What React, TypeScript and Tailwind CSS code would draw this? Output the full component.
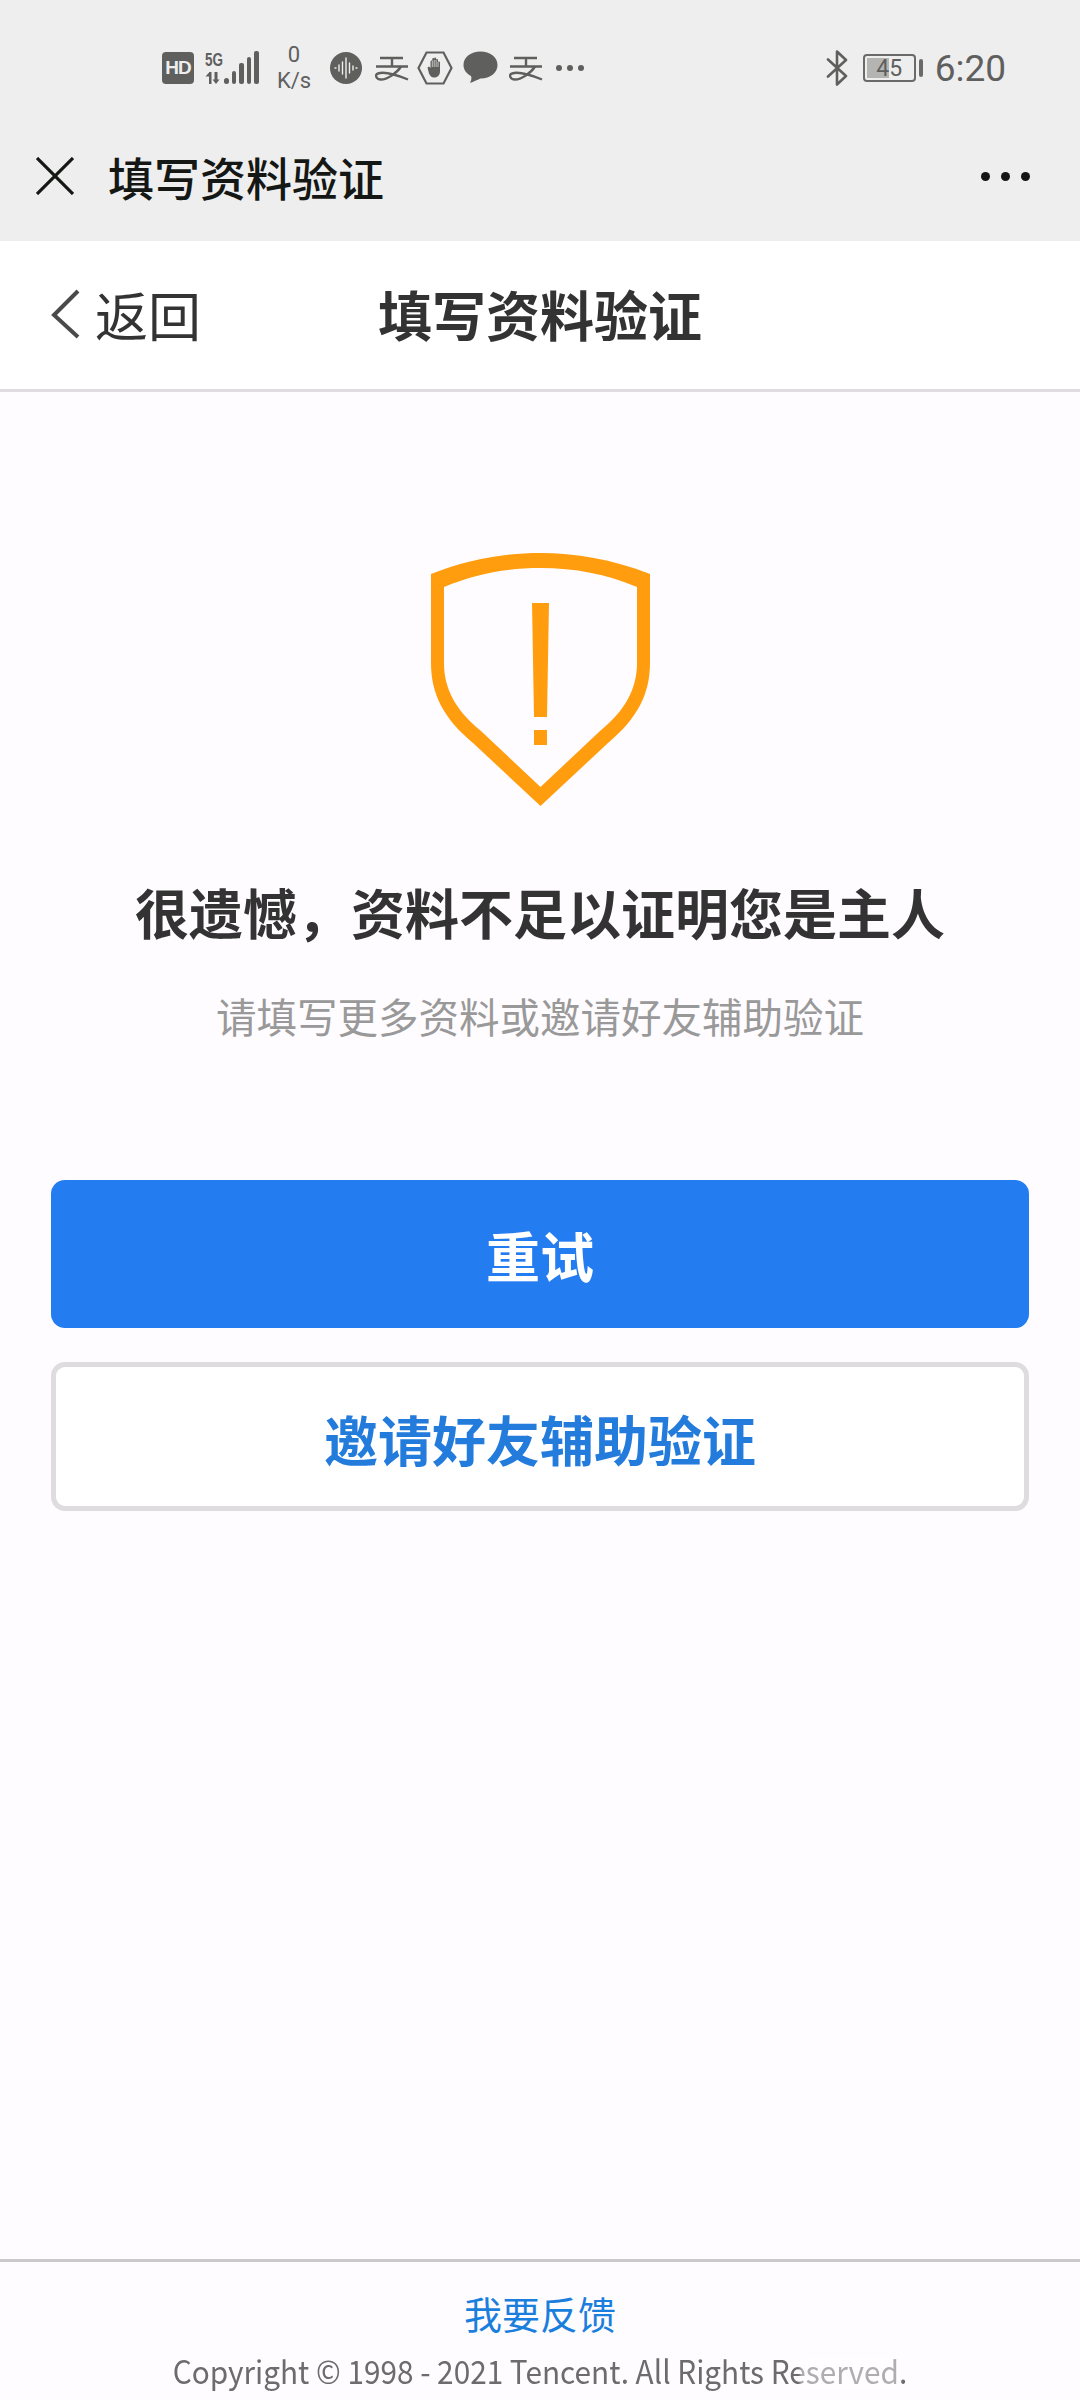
const cjk = "font-['Noto_Sans_CJK_SC','Noto_Sans',sans-serif]";

function AlipayGlyph() {
  return (
    <svg width="34" height="26" viewBox="0 0 34 26" fill="none" stroke="#5f605e" strokeWidth="2.400">
      <path d="M5 3H28M1 11.500H33M17 3V11.500" />
      <path d="M26 11.500C22 18 12 24.500 6 24.500C1 24.500 -0.500 19.500 3 18.500C10 16 22 20 33 24.500" />
    </svg>
  );
}

function StatusBar() {
  return (
    <div className="flex h-[100px] items-end pb-[2px] pl-[162px] pr-[74px] text-[#5f605e]">
      <div className="flex h-[60px] items-center">
        <div className="flex h-[32px] w-[32px] items-center justify-center rounded-[4px] bg-[#5f605e] font-['Liberation_Sans',sans-serif] text-[19px] font-bold tracking-[-1px] text-[#eeeeee]">
          HD
        </div>
        <svg className="ml-[11px] overflow-visible" width="54" height="34" viewBox="0 0 54 34" fill="#5f605e">
          <text x="0" y="15" fontFamily="Liberation Sans, sans-serif" fontSize="19" fontWeight="700" textLength="18" lengthAdjust="spacingAndGlyphs">
            5G
          </text>
          <path d="M4 21h2.500v12h-2.500zM0.500 25.500l4-4.500v4.500zM11 33l-3.500-4.500h2v-7.500h3v7.500h2l-3.500 4.500z" />
          <rect x="19" y="27" width="5" height="6" rx="2.500" />
          <rect x="27" y="20" width="4" height="13" rx="2" />
          <rect x="34" y="12" width="5" height="21" rx="2" />
          <rect x="42" y="6" width="4" height="27" rx="2" />
          <rect x="49" y="0" width="5" height="33" rx="2" />
        </svg>
        <div className="ml-[17px] flex w-[36px] flex-col items-center font-['Roboto',sans-serif] text-[22px] leading-[26px]">
          <span>0</span>
          <span>K/s</span>
        </div>
        <svg className="ml-[18px]" width="32" height="32" viewBox="0 0 32 32">
          <circle cx="16" cy="16" r="16" fill="#5f605e" />
          <path
            d="M5 16h1M9 13v6M12.500 10v12M16 6v20M19.500 11v10M23 14v4M26 16h1"
            stroke="#eeeeee"
            strokeWidth="1.400"
            strokeLinecap="round"
          />
        </svg>
        <div className="ml-[13px]">
          <AlipayGlyph />
        </div>
        <svg className="ml-[8px]" width="36" height="34" viewBox="0 0 36 34" fill="none">
          <path d="M9.500 1.500H26.500L34.500 17L26.500 32.500H9.500L1.500 17Z" stroke="#5f605e" strokeWidth="2.200" />
          <path
            d="M10.500 16.500L12 15.500L13.500 17V10.500C13.500 9 15.300 9 15.300 10.500V8C15.300 6.500 17.200 6.500 17.200 8V7.500C17.200 6 19.100 6 19.100 7.500V9C19.100 7.500 21 7.500 21 9V11.500C21 10 23 10 23 11.500V20C23 24 21 26.500 17 26.500C14 26.500 13 24.500 12 22.500Z"
            fill="#5f605e"
          />
          <path d="M15.300 10V16M17.200 9V16M19.100 9V16M21 11V16" stroke="#eeeeee" strokeWidth="0.700" />
        </svg>
        <svg className="ml-[10px]" width="35" height="34" viewBox="0 0 35 34" fill="#5f605e">
          <path d="M17.500 0.500C27 0.500 34.500 6 34.500 14C34.500 22 27 27.500 18 27.500C16.500 27.500 15 29 7 32C8 30 9 27 8 25C3 22.500 0.500 18.500 0.500 14C0.500 6 8 0.500 17.500 0.500Z" />
        </svg>
        <div className="ml-[11px]">
          <AlipayGlyph />
        </div>
        <div className="ml-[13px] flex gap-[5px]">
          <span className="h-[6px] w-[6px] rounded-full bg-[#5f605e]" />
          <span className="h-[6px] w-[6px] rounded-full bg-[#5f605e]" />
          <span className="h-[6px] w-[6px] rounded-full bg-[#5f605e]" />
        </div>
      </div>
      <div className="ml-auto flex h-[60px] items-center">
        <svg width="22" height="36" viewBox="0 0 22 36" fill="none" stroke="#5f605e" strokeWidth="2.600" strokeLinecap="round" strokeLinejoin="round">
          <path d="M2 9.500L20 26L11 34.500V1.500L20 10L2 26.500" />
        </svg>
        <div className="relative ml-[15px] flex h-[28px] w-[53px] items-center justify-center overflow-hidden rounded-[4px] border-2 border-[#6a6b69] font-['Roboto',sans-serif] text-[23px] leading-none">
          <span className="absolute left-[2px] top-[2px] h-[20px] w-[22px] bg-[#b4b5b3]" />
          <span className="relative">45</span>
        </div>
        <span className="ml-[3px] h-[18px] w-[4px] rounded-[2px] bg-[#6a6b69]" />
        <span className="ml-[12px] font-['Roboto',sans-serif] text-[37px] leading-none">6:20</span>
      </div>
    </div>
  );
}

export default function App() {
  return (
    <div className={`flex h-[2400px] flex-col overflow-hidden bg-[#fffcff] ${cjk}`}>
      <div className="h-[241px] bg-[#eeeeee]">
        <StatusBar />
        <div className="flex h-[141px] items-start pl-[36px] pr-[50px] pt-[50px]">
          <div className="flex h-[52px] items-center">
            <svg width="38" height="38" viewBox="0 0 38 38" fill="none" stroke="#151715" strokeWidth="3.200">
              <path d="M1 1L37 37M37 1L1 37" />
            </svg>
            <span className="ml-[34px] text-[46px] leading-[52px] font-medium text-[#151715]">填写资料验证</span>
          </div>
          <div className="ml-auto flex h-[52px] items-center gap-[11px]">
            <span className="h-[9px] w-[9px] rounded-full bg-[#151715]" />
            <span className="h-[9px] w-[9px] rounded-full bg-[#151715]" />
            <span className="h-[9px] w-[9px] rounded-full bg-[#151715]" />
          </div>
        </div>
      </div>

      <div className="relative flex h-[151px] items-center justify-center border-b-[3px] border-[#dedcde] bg-white pb-[3px]">
        <div className="absolute left-[50px] top-[47px] flex items-center">
          <svg width="30" height="50" viewBox="0 0 30 50" fill="none" stroke="#4a4a4a" strokeWidth="4">
            <path d="M28 2L4 26L28 48" />
          </svg>
          <span className="ml-[15px] text-[53px] leading-[52px] text-[#333333]">返回</span>
        </div>
        <span className="text-[54px] leading-[60px] font-bold text-[#333333]">填写资料验证</span>
      </div>

      <div className="flex flex-1 flex-col items-center px-[51px] pt-[161px]">
        <svg width="219" height="253" viewBox="0 0 219 253" fill="#ff9d0f">
          <path
            fillRule="evenodd"
            d="M0 21C38 6 75 0 109.500 0C144 0 181 6 219 21V110C219 140 207 165 177 190L109.500 253L42 190C12 165 0 140 0 110ZM13 34V110C13 135 24 157 50 178L109.500 234L169 178C195 157 206 135 206 110V34C175 21 144 15 109.500 15C75 15 44 21 13 34Z"
          />
          <path d="M101 50H118L116 164H103Z" />
          <rect x="103" y="177" width="13" height="15" />
        </svg>

        <h1 className="mt-[74px] text-[54px] leading-[64px] font-bold text-[#333333]">
          很遗憾，资料不足以证明您是主人
        </h1>
        <p className="mt-[44px] text-[40.500px] leading-[56px] text-[#999999]">请填写更多资料或邀请好友辅助验证</p>

        <button className="mt-[136px] flex h-[148px] w-full items-center justify-center rounded-[14px] bg-[#237cf0] text-[54px] font-bold text-white">
          <span className="mt-[1px]">重试</span>
        </button>
        <button className="mt-[34px] flex h-[149px] w-full items-center justify-center rounded-[14px] border-[5px] border-[#dedcde] bg-white text-[54px] font-bold text-[#237cdc]">
          <span className="mt-[3px]">邀请好友辅助验证</span>
        </button>
      </div>

      <div className="relative flex h-[141px] flex-col items-center border-t-[3px] border-[#ccc9cc]">
        <a className="mt-[26px] text-[38px] leading-[50px] text-[#1a7fdc]">我要反馈</a>
        <p className="mt-[9px] scale-x-[0.93] whitespace-nowrap text-[32px] leading-[46px] text-[#6c6c6c]">
          Copyright © 1998 - 2021 Tencent. All Rights Reserved.
        </p>
        {/* faint watermark sitting over the copyright line */}
        <div className="absolute left-[800px] top-[96px] h-[30px] w-[100px] rounded-[6px] bg-white/45 blur-[1px]" />
      </div>
    </div>
  );
}
